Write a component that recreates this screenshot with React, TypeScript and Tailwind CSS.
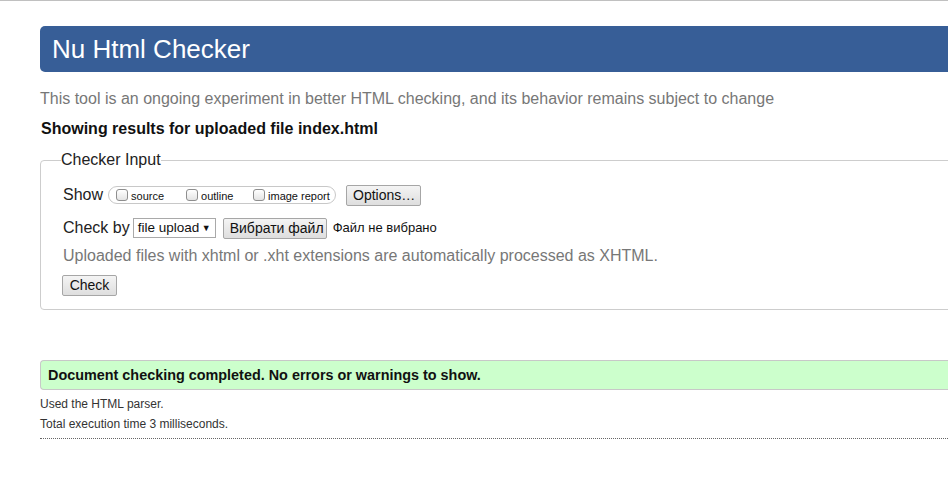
const font = { fontFamily: '"Liberation Sans", Arial, sans-serif' }

const Checkbox = ({ label }: { label: string }) => (
  <label className="flex items-center gap-[3px] cursor-pointer">
    <span className="w-[12px] h-[12px] border border-[#8e8e8e] rounded-[3px] bg-gradient-to-b from-white to-[#e4e4e4]" />
    <span className="text-[11px] leading-[14px] text-[#111] pt-[2px]">{label}</span>
  </label>
)

const Button = ({ children, className = "" }: { children: React.ReactNode; className?: string }) => (
  <button
    className={
      "h-[21px] px-[6px] whitespace-nowrap border border-[#a6a6a6] rounded-[2px] bg-gradient-to-b from-[#f4f4f4] to-[#dedede] text-[14px] leading-[19px] text-[#111] " +
      className
    }
  >
    {children}
  </button>
)

export default function App() {
  return (
    <div
      className="w-screen min-h-screen overflow-hidden bg-white border-t border-[#c0c0c0] text-[#222]"
      style={font}
    >
      <div className="ml-[40px] w-[1000px] pt-[25px]">
        {/* header */}
        <h1 className="h-[46px] bg-[#375e97] rounded-l-[5px] pl-[12px] text-white text-[26px] leading-[46px]">
          Nu Html Checker
        </h1>

        <p className="mt-[17px] text-[16px] leading-[20px] text-[#777]">
          This tool is an ongoing experiment in better HTML checking, and its behavior remains subject to change
        </p>
        <p className="mt-[10px] ml-[1px] text-[16px] leading-[20px] font-bold text-[#111]">
          Showing results for uploaded file index.html
        </p>

        {/* checker input */}
        <fieldset className="mt-[11px] border border-[#cdcdcd] rounded-[4px] pl-[20px] pb-[12px]">
          <legend className="text-[16px] leading-[20px] text-[#222]">Checker Input</legend>

          <div className="mt-[13px] pl-[2px] flex items-center h-[24px]">
            <span className="text-[16px] leading-[20px]">Show</span>
            <div className="ml-[5px] h-[18px] w-[228px] border border-[#c8c8c8] rounded-full flex items-center pl-[7px]">
              <div className="w-[70px]">
                <Checkbox label="source" />
              </div>
              <div className="w-[67px]">
                <Checkbox label="outline" />
              </div>
              <Checkbox label="image report" />
            </div>
            <Button className="ml-[10px] w-[75px]">Options…</Button>
          </div>

          <div className="mt-[10px] pl-[2px] flex items-center h-[22px]">
            <span className="text-[16px] leading-[20px]">Check by</span>
            <div className="ml-[3px] w-[83px] h-[20px] border border-[#a9a9a9] bg-white flex items-center pl-[4px] pr-[4px] justify-between">
              <span className="text-[13.5px] leading-[18px] text-[#111] whitespace-nowrap">file upload</span>
              <span className="text-[9px] leading-[10px] text-[#111]">▼</span>
            </div>
            <Button className="ml-[7px] w-[104px] h-[21px]">Вибрати файл</Button>
            <span className="ml-[6px] text-[13px] leading-[18px] text-[#111] whitespace-nowrap">Файл не вибрано</span>
          </div>

          <p className="mt-[7px] pl-[2px] text-[16px] leading-[20px] text-[#777]">
            Uploaded files with xhtml or .xht extensions are automatically processed as XHTML.
          </p>

          <div className="mt-[7px] pl-[1px]">
            <Button className="w-[55px] h-[20px]">Check</Button>
          </div>
        </fieldset>

        {/* result */}
        <div className="mt-[50px] h-[30px] bg-[#ccffcc] border border-r-0 border-[#c8c8c8] rounded-l-[4px] pl-[7px] flex items-center">
          <span className="text-[14.4px] leading-[20px] font-bold text-[#111]">
            Document checking completed. No errors or warnings to show.
          </span>
        </div>

        <p className="mt-[4px] text-[12px] leading-[20px] text-[#333]">Used the HTML parser.</p>
        <p className="text-[12px] leading-[20px] text-[#333]">Total execution time 3 milliseconds.</p>
        <div className="mt-[4px] border-t border-dotted border-[#666]" />
      </div>
    </div>
  )
}
